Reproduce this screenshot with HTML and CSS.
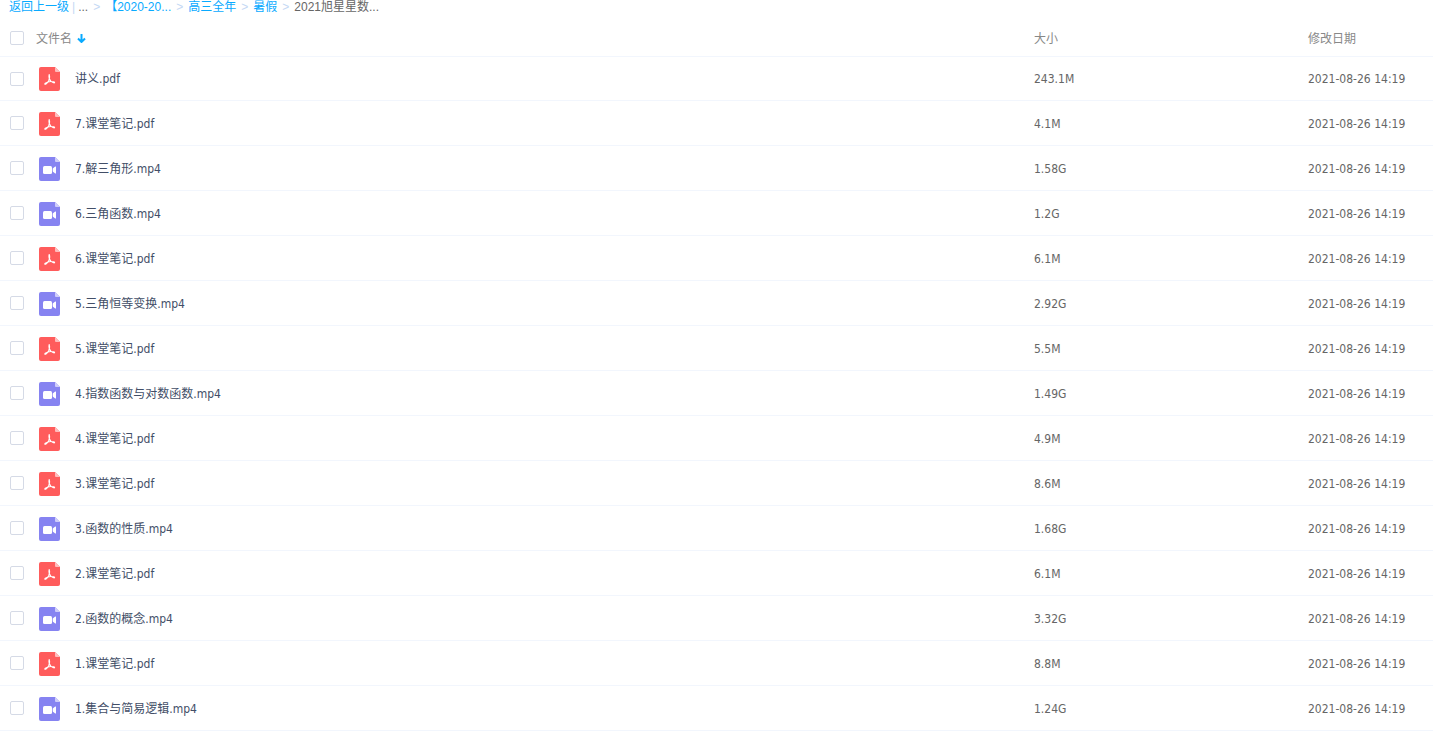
FILE: index.html
```
<!DOCTYPE html>
<html lang="zh-CN">
<head>
    <meta charset="UTF-8">
    <meta name="viewport" content="width=device-width, initial-scale=1.0">
    <title>文件列表</title>
    <link rel="stylesheet" href="styles.css">
</head>
<body>
    <svg class="sprite" aria-hidden="true">
        <symbol id="icon-pdf" viewBox="0 0 21 24">
            <path d="M2 0h14l5 5v17a2 2 0 0 1-2 2H2a2 2 0 0 1-2-2V2a2 2 0 0 1 2-2z" fill="#ff5c5c"/>
            <path d="M16 0l5 5h-4a1 1 0 0 1-1-1z" fill="#ffbdbd"/>
            <path d="M10.2 7.500c1 2.100.5 4.200-.5 6.200-.8 1.500-1.800 2.700-3 3.500-1 .4-1.200-.5-.4-1.100 2.400-1.500 5.800-2 8.800-1.200.9.4.5 1.200-.4.9-2.100-.8-3.900-2.300-4.500-4.500-.3-1.300-.4-2.500 0-3.800z" fill="none" stroke="#fff" stroke-width="1.100" stroke-linejoin="round"/>
        </symbol>
        <symbol id="icon-video" viewBox="0 0 21 24">
            <path d="M2 0h14l5 5v17a2 2 0 0 1-2 2H2a2 2 0 0 1-2-2V2a2 2 0 0 1 2-2z" fill="#8683f1"/>
            <path d="M16 0l5 5h-4a1 1 0 0 1-1-1z" fill="#cfcdfa"/>
            <rect x="4" y="9" width="9" height="8" rx="1.500" fill="#fff"/>
            <path d="M13.700 12q0-.4.3-.7l2.200-1.700q.8-.4.800.4v6q0 .8-.8.400L14 14.700q-.3-.3-.3-.7z" fill="#fff"/>
        </symbol>
    </svg>

    <nav class="breadcrumb">
        <a href="#">返回上一级</a>
        <span class="divider">|</span>
        <span>...</span>
        <span class="sep">&gt;</span>
        <a href="#">【2020-20...</a>
        <span class="sep">&gt;</span>
        <a href="#">高三全年</a>
        <span class="sep">&gt;</span>
        <a href="#">暑假</a>
        <span class="sep">&gt;</span>
        <span>2021旭星星数...</span>
    </nav>

    <table class="file-list">
        <thead>
            <tr>
                <th class="col-name">
                    <div class="name">
                        <input type="checkbox" id="checkAll" aria-label="全选">
                        <span class="sort">文件名
                            <svg class="arrow" viewBox="0 0 9 9"><path d="M4.500 0v7.500M1 4.500l3.500 3.500L8 4.500" fill="none" stroke="#09aaff" stroke-width="2"/></svg>
                        </span>
                    </div>
                </th>
                <th class="col-size">大小</th>
                <th class="col-date">修改日期</th>
            </tr>
        </thead>
        <tbody id="files"></tbody>
    </table>

    <script>
        const files = [
            ['讲义.pdf', '243.1M'],
            ['7.课堂笔记.pdf', '4.1M'],
            ['7.解三角形.mp4', '1.58G'],
            ['6.三角函数.mp4', '1.2G'],
            ['6.课堂笔记.pdf', '6.1M'],
            ['5.三角恒等变换.mp4', '2.92G'],
            ['5.课堂笔记.pdf', '5.5M'],
            ['4.指数函数与对数函数.mp4', '1.49G'],
            ['4.课堂笔记.pdf', '4.9M'],
            ['3.课堂笔记.pdf', '8.6M'],
            ['3.函数的性质.mp4', '1.68G'],
            ['2.课堂笔记.pdf', '6.1M'],
            ['2.函数的概念.mp4', '3.32G'],
            ['1.课堂笔记.pdf', '8.8M'],
            ['1.集合与简易逻辑.mp4', '1.24G']
        ];

        document.getElementById('files').innerHTML = files.map(([name, size], i) => {
            const icon = name.endsWith('.pdf') ? 'icon-pdf' : 'icon-video';
            return `<tr>
                <td>
                    <div class="name">
                        <input type="checkbox" id="file${i}">
                        <svg class="icon"><use href="#${icon}"/></svg>
                        <label for="file${i}">${name}</label>
                    </div>
                </td>
                <td class="meta">${size}</td>
                <td class="meta">2021-08-26 14:19</td>
            </tr>`;
        }).join('');

        document.getElementById('checkAll').addEventListener('change', e => {
            document.querySelectorAll('#files input').forEach(box => box.checked = e.target.checked);
        });
    </script>
</body>
</html>
```
FILE: styles.css
```
body {
    margin: 0;
    background: #fff;
    color: #666;
    font-family: "Liberation Sans", "Noto Sans CJK SC", sans-serif;
    font-size: 12px;
}
.sprite {
    display: none;
}
.breadcrumb {
    display: flex;
    padding: 1px 0 0 9px;
    line-height: 13px;
    white-space: nowrap;
}
.breadcrumb a {
    color: #09aaff;
    text-decoration: none;
}
.divider {
    margin: 0 3px;
    color: #c4d8f4;
}
.sep {
    margin: 0 5px;
    color: #c4d8f4;
}
.file-list {
    width: 100%;
    table-layout: fixed;
    border-collapse: separate;
    border-spacing: 0;
    font-family: "DejaVu Sans Condensed", "Noto Sans CJK SC", sans-serif;
}
.file-list th,
.file-list td {
    box-sizing: border-box;
    height: 45px;
    padding: 0 0 0 10px;
    border-bottom: 1px solid #f2f6fd;
    text-align: left;
    white-space: nowrap;
}
.file-list th {
    height: 43px;
    padding-top: 5px;
    color: #888;
    font-weight: normal;
}
.file-list tbody tr:first-child td {
    height: 44px;
}
.file-list tbody tr:hover {
    background: #f4fbff;
}
.col-size { width: 274px; }
.col-date { width: 135px; }
.name {
    display: flex;
    align-items: center;
}
.name label {
    padding-bottom: 2px;
    color: #424e67;
}
.file-list .meta {
    padding-top: 1px;
    color: #666;
}
.icon {
    width: 21px;
    height: 24px;
    margin: 1px 15px 0 0;
}
.sort {
    margin-left: -3px;
}
.arrow {
    width: 9px;
    height: 9px;
    margin-left: 2px;
}
input[type="checkbox"] {
    appearance: none;
    box-sizing: border-box;
    width: 14px;
    height: 14px;
    margin: 0 15px 0 0;
    border: 1px solid #d5dae6;
    border-radius: 2px;
    background: #fff;
}
input[type="checkbox"]:checked {
    border-color: #09aaff;
    background: #09aaff;
}
```
